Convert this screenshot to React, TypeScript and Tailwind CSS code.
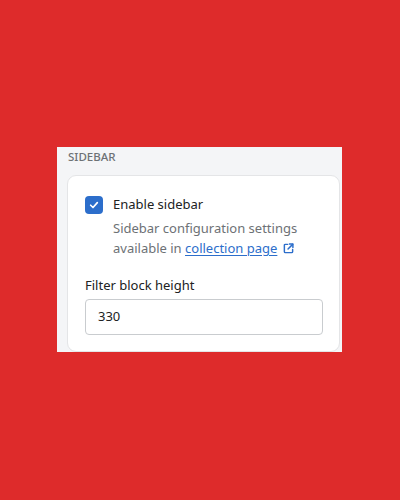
import React from 'react';

const ExternalIcon: React.FC = () => (
  <svg viewBox="0 0 12 12" className="inline-block w-[11px] h-[11px] ml-[6px] align-[-1px]" fill="none">
    <path d="M5 1.5H2.5a1 1 0 0 0-1 1v7a1 1 0 0 0 1 1h7a1 1 0 0 0 1-1V7" stroke="#2c6ecb" strokeWidth="1.6" strokeLinecap="round" />
    <path d="M7 1.2h3.8V5" stroke="#2c6ecb" strokeWidth="1.6" strokeLinecap="round" strokeLinejoin="round" />
    <path d="M10.5 1.5 5.5 6.5" stroke="#2c6ecb" strokeWidth="1.6" strokeLinecap="round" />
  </svg>
);

const App: React.FC = () => {
  return (
    <div className="w-[400px] h-[500px] bg-[#de2b2b] pt-[147px] pl-[57px] font-['Noto_Sans',sans-serif]">
      <div className="w-[285px] h-[205px] bg-[#f4f5f7] pl-[10px] pr-[2px] pt-[1px]">
        <div className="text-[11.5px] leading-[16px] font-medium text-[#6d7175] uppercase pl-[1px] pt-[1px] mb-[10px]">
          Sidebar
        </div>

        <div className="bg-white border border-[#e4e5e7] rounded-[9px] pl-[17px] pr-[16px] pt-[19px] pb-[16px]">
          {/* checkbox row */}
          <label className="flex items-center gap-[10px] h-[20px]">
            <span className="w-[18px] h-[18px] rounded-[4px] bg-[#2c6ecb] flex items-center justify-center">
              <svg viewBox="0 0 12 12" className="w-[10px] h-[10px]" fill="none">
                <path d="M2 6.3 4.8 9 10 3.2" stroke="white" strokeWidth="2" strokeLinecap="round" strokeLinejoin="round" />
              </svg>
            </span>
            <span className="text-[13px] text-[#202223]">Enable sidebar</span>
          </label>
          <p className="pl-[28px] mt-[3px] text-[13px] leading-[20px] text-[#6d7175]">
            Sidebar configuration settings available in{' '}
            <a className="text-[#2c6ecb] underline underline-offset-[2px]">collection page</a>
            <ExternalIcon />
          </p>

          <div className="mt-[17px] text-[13px] leading-[20px] text-[#202223]">Filter block height</div>
          <div className="mt-[4px] h-[36px] border border-[#c9cccf] rounded-[4px] px-[12px] flex items-center text-[13px] text-[#202223]">
            330
          </div>
        </div>
      </div>
    </div>
  );
};

export default App;
